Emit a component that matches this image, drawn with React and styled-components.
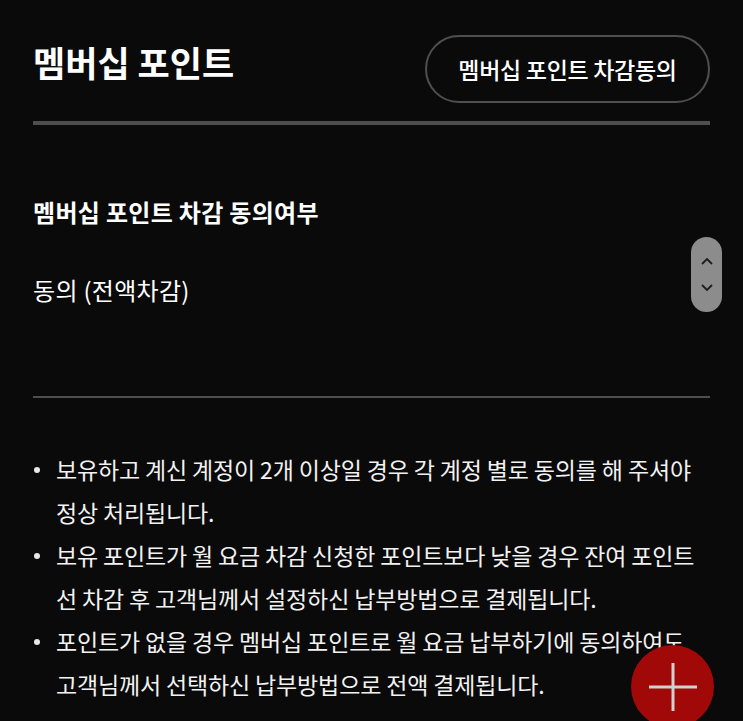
import React from "react";
import styled, { createGlobalStyle } from "styled-components";

const Global = createGlobalStyle`
  html, body { margin: 0; padding: 0; background: #0a0a0a; }
  body { font-family: "Noto Sans CJK KR", "Noto Sans", sans-serif; color: #fff; }
  * { box-sizing: border-box; }
`;

const Page = styled.div`
  position: relative;
  width: 743px;
  height: 721px;
  overflow: hidden;
  background: #0a0a0a;
  padding: 0 33px;
`;

const Header = styled.div`
  display: flex;
  justify-content: space-between;
  align-items: flex-start;
  padding-top: 35px;
  padding-bottom: 18px;
  border-bottom: 4px solid #4e4e4e;
`;

const Title = styled.h1`
  margin: 0;
  margin-top: 3px;
  font-size: 35px;
  font-weight: 700;
  letter-spacing: 0;
  line-height: 48px;
`;

const PillButton = styled.button`
  height: 68px;
  width: 285px;
  border-radius: 34px;
  border: 2px solid #4f4f4f;
  background: transparent;
  color: #fff;
  font-family: inherit;
  font-size: 23px;
  font-weight: 500;
  letter-spacing: -0.3px;
  display: flex;
  align-items: center;
  justify-content: center;
  padding: 0;
`;

const Section = styled.section`
  padding-top: 70px;
  padding-bottom: 89px;
  border-bottom: 2px solid #4e4e4e;
`;

const Label = styled.div`
  font-size: 24px;
  font-weight: 700;
  letter-spacing: 0.3px;
  line-height: 34px;
`;

const Value = styled.div`
  margin-top: 44px;
  font-size: 24px;
  font-weight: 400;
  letter-spacing: 0.3px;
  line-height: 34px;
`;

const Notes = styled.ul`
  list-style: none;
  margin: 0;
  padding: 50px 0 0 0;
`;

const Note = styled.li`
  position: relative;
  padding-left: 23px;
  font-size: 23px;
  line-height: 43px;
  letter-spacing: -0.15px;
  word-break: keep-all;
  color: #f2f2f2;
  &::before {
    content: "";
    position: absolute;
    left: 1px;
    top: 19px;
    width: 6px;
    height: 6px;
    border-radius: 50%;
    background: #e8e8e8;
  }
`;

const Scroller = styled.div`
  position: absolute;
  left: 691px;
  top: 237px;
  width: 31px;
  height: 75px;
  border-radius: 16px;
  background: #8c8c8c;
  display: flex;
  flex-direction: column;
  align-items: center;
  justify-content: center;
  gap: 19px;
`;

const Fab = styled.div`
  position: absolute;
  left: 631px;
  top: 645px;
  width: 83px;
  height: 83px;
  border-radius: 50%;
  background: #a10909;
  display: flex;
  align-items: center;
  justify-content: center;
`;

const Chevron = ({ up }) => (
  <svg width="14" height="8" viewBox="0 0 14 8">
    <path
      d={up ? "M2 7 L7 2 L12 7" : "M2 1 L7 6 L12 1"}
      fill="none"
      stroke="#1e1e1e"
      strokeWidth="1.8"
    />
  </svg>
);

const notes = [
  "보유하고 계신 계정이 2개 이상일 경우 각 계정 별로 동의를 해 주셔야 정상 처리됩니다.",
  "보유 포인트가 월 요금 차감 신청한 포인트보다 낮을 경우 잔여 포인트 선 차감 후 고객님께서 설정하신 납부방법으로 결제됩니다.",
  "포인트가 없을 경우 멤버십 포인트로 월 요금 납부하기에 동의하여도 고객님께서 선택하신 납부방법으로 전액 결제됩니다.",
];

export default function App() {
  return (
    <>
      <Global />
      <Page>
        <Header>
          <Title>멤버십 포인트</Title>
          <PillButton>멤버십 포인트 차감동의</PillButton>
        </Header>
        <Section>
          <Label>멤버십 포인트 차감 동의여부</Label>
          <Value>동의 (전액차감)</Value>
        </Section>
        <Notes>
          {notes.map((n) => (
            <Note key={n}>{n}</Note>
          ))}
        </Notes>
        <Scroller>
          <Chevron up />
          <Chevron />
        </Scroller>
        <Fab>
          <svg width="52" height="52" viewBox="0 0 52 52">
            <path d="M26 2 V50 M2 26 H50" stroke="#d0d0d0" strokeWidth="3" />
          </svg>
        </Fab>
      </Page>
    </>
  );
}
